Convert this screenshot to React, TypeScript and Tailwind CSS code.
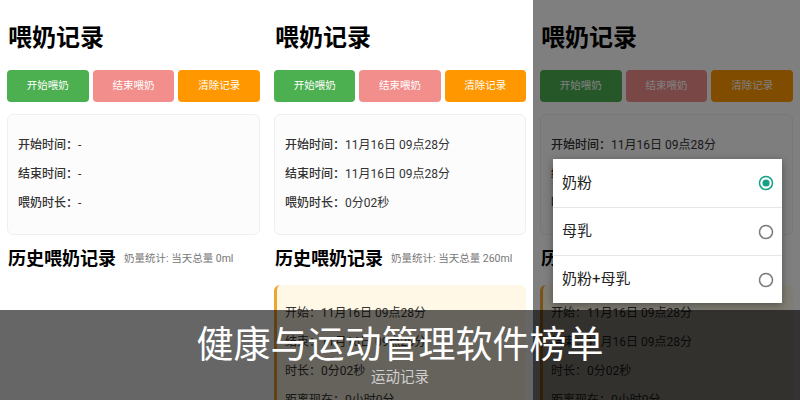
import React from "react";

interface Info {
  start: string;
  end: string;
  duration: string;
}

interface Props {
  info: Info;
  total: string;
  history: boolean;
}

const font = { fontFamily: 'Roboto, "Noto Sans CJK SC", "Noto Sans", sans-serif' };

const Screen: React.FC<Props> = ({ info, total, history }) => {
  return (
    <div className="h-[400px] overflow-hidden bg-white px-[7px] pt-[22px]">
      <h1 className="pl-px text-[24px] font-bold leading-[32px] text-black">喂奶记录</h1>
      <div className="mt-4 grid grid-cols-3 gap-[4px]">
        <div className="flex h-[32px] items-center justify-center rounded-[4px] bg-[#4caf50] text-[10.5px] text-white">
          开始喂奶
        </div>
        <div className="flex h-[32px] items-center justify-center rounded-[4px] bg-[#f28e8b] text-[10.5px] text-white">
          结束喂奶
        </div>
        <div className="flex h-[32px] items-center justify-center rounded-[4px] bg-[#ff9800] text-[10.5px] text-white">
          清除记录
        </div>
      </div>
      <div className="mt-3 rounded-[6px] border border-[#efefef] bg-[#fcfcfc] px-[10px] py-4 text-[12px] leading-[29px] text-[#333]">
        <div>
          <span className="font-medium">开始时间：</span>
          {info.start}
        </div>
        <div>
          <span className="font-medium">结束时间：</span>
          {info.end}
        </div>
        <div>
          <span className="font-medium">喂奶时长：</span>
          {info.duration}
        </div>
      </div>
      <div className="mt-[12px] flex items-center gap-2 pl-px">
        <h2 className="text-[18px] font-bold leading-[24px] text-black">历史喂奶记录</h2>
        <span className="text-[10.5px] text-[#777]">奶量统计: 当天总量 {total}</span>
      </div>
      {history && (
        <div className="mt-[14px] rounded-[6px] border-l-[3px] border-[#f0a52c] bg-[#fff8e6] pl-[8px] pt-[14px] text-[12px] leading-[29px] text-[#333]">
          <div>开始：11月16日 09点28分</div>
          <div>结束：11月16日 09点28分</div>
          <div>时长：0分02秒</div>
          <div>距离现在：0小时0分</div>
        </div>
      )}
    </div>
  );
};

const Radio: React.FC<{ checked?: boolean }> = ({ checked }) => (
  <svg width="16" height="16" viewBox="0 0 16 16">
    <circle
      cx="8"
      cy="8"
      r="6.5"
      fill="none"
      stroke={checked ? "#16a085" : "#7a7a7a"}
      strokeWidth="1.5"
    />
    {checked && <circle cx="8" cy="8" r="3.6" fill="#16a085" />}
  </svg>
);

const done: Info = {
  start: "11月16日 09点28分",
  end: "11月16日 09点28分",
  duration: "0分02秒",
};

export default function App() {
  const options = ["奶粉", "母乳", "奶粉+母乳"];
  return (
    <div className="relative h-[400px] w-[800px] overflow-hidden bg-white" style={font}>
      <div className="grid grid-cols-[267px_266px_267px]">
        <Screen info={{ start: "-", end: "-", duration: "-" }} total="0ml" history={false} />
        <Screen info={done} total="260ml" history />
        <div className="relative">
          <Screen info={done} total="260ml" history />
          <div className="absolute inset-0 bg-black/50" />
          <div className="absolute left-[20px] top-[159px] w-[229px] bg-white shadow-[0_2px_8px_rgba(0,0,0,0.35)]">
            {options.map((o, i) => (
              <div
                key={o}
                className={
                  "flex h-[48px] items-center justify-between pl-[9px] pr-[8px] text-[15px] text-[#222] " +
                  (i > 0 ? "border-t border-[#e6e6e6]" : "")
                }
              >
                <span>{o}</span>
                <Radio checked={i === 0} />
              </div>
            ))}
          </div>
        </div>
      </div>
      <div className="absolute bottom-0 left-0 right-0 h-[90px] bg-black/60 pt-[16px] text-center">
        <div className="text-[37px] leading-[40px] text-white">健康与运动管理软件榜单</div>
        <div className="mt-[2px] text-[14.5px] leading-[20px] text-[#d0d0d0]">运动记录</div>
      </div>
    </div>
  );
}
